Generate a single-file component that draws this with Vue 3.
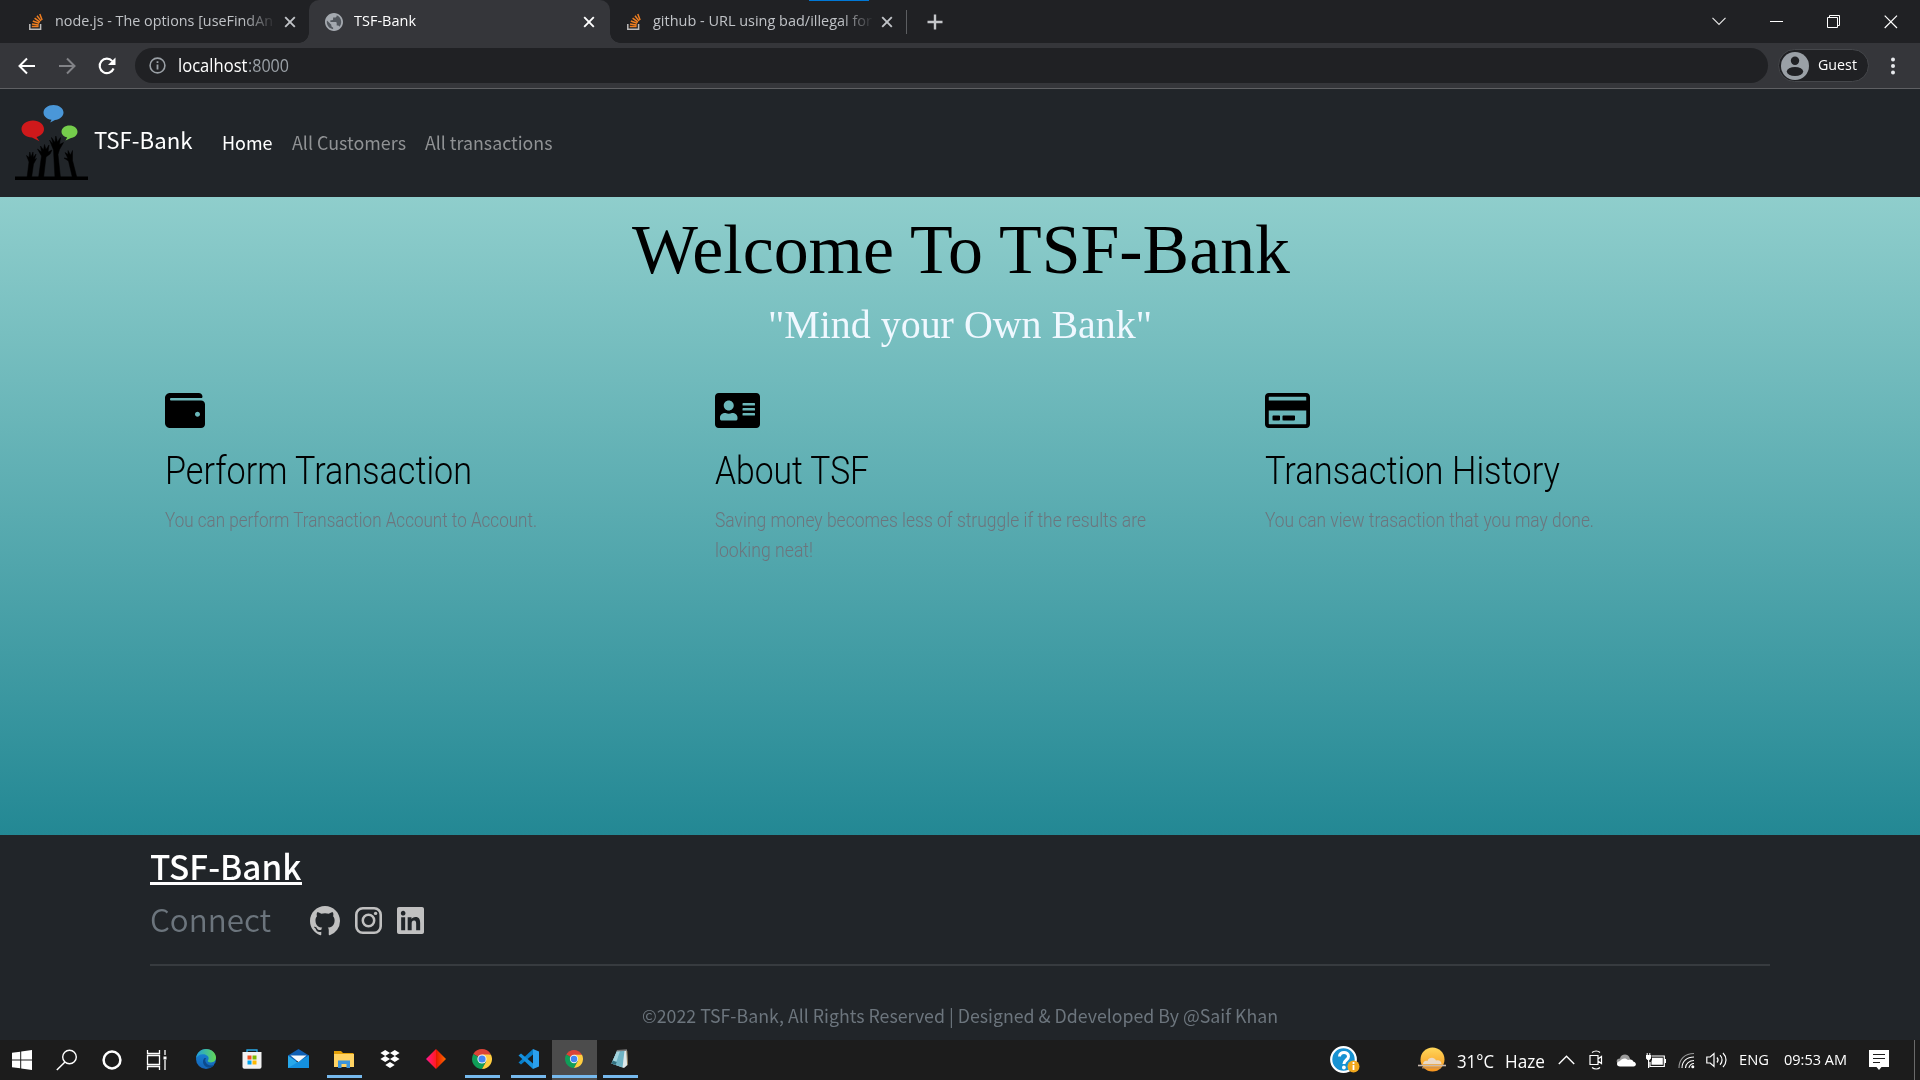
<script setup>
// Stretches a label horizontally so that it takes exactly the given width.
const vFit = {
  mounted(el, { value }) {
    const natural = el.getBoundingClientRect().width
    if (!natural) return
    el.style.transform = `scaleX(${value / natural})`
    el.style.marginRight = `${value - natural}px`
  }
}

const cards = [
  {
    title: 'Perform Transaction', titleWidth: 307, box: '0 32 512 448', iconWidth: 40,
    lines: [{ text: 'You can perform Transaction Account to Account.', width: 372 }],
    icon: 'M461.2 128H80c-8.84 0-16-7.16-16-16s7.16-16 16-16h384c8.84 0 16-7.16 16-16 0-26.51-21.49-48-48-48H64C28.65 32 0 60.65 0 96v320c0 35.35 28.65 64 64 64h397.2c28.02 0 50.8-21.53 50.8-48V176c0-26.47-22.78-48-50.8-48zM416 336c-17.67 0-32-14.33-32-32s14.33-32 32-32 32 14.33 32 32-14.33 32-32 32z'
  },
  {
    title: 'About TSF', titleWidth: 154, box: '0 32 576 448', iconWidth: 45,
    lines: [
      { text: 'Saving money becomes less of struggle if the results are', width: 431 },
      { text: 'looking neat!', width: 98 }
    ],
    icon: 'M528 32H48C21.5 32 0 53.5 0 80v352c0 26.5 21.5 48 48 48h480c26.5 0 48-21.5 48-48V80c0-26.5-21.5-48-48-48zm-352 96c35.3 0 64 28.7 64 64s-28.7 64-64 64-64-28.7-64-64 28.7-64 64-64zm112 236.8c0 10.6-10 19.2-22.4 19.2H86.4C74 384 64 375.4 64 364.8v-19.2c0-31.8 30.1-57.6 67.2-57.6h5c12.3 5.1 25.7 8 39.8 8s27.6-2.9 39.8-8h5c37.1 0 67.2 25.8 67.2 57.6v19.2zM512 312c0 4.4-3.6 8-8 8H360c-4.4 0-8-3.6-8-8v-16c0-4.4 3.6-8 8-8h144c4.4 0 8 3.6 8 8v16zm0-64c0 4.4-3.6 8-8 8H360c-4.4 0-8-3.6-8-8v-16c0-4.4 3.6-8 8-8h144c4.4 0 8 3.6 8 8v16zm0-64c0 4.4-3.6 8-8 8H360c-4.4 0-8-3.6-8-8v-16c0-4.4 3.6-8 8-8h144c4.4 0 8 3.6 8 8v16z'
  },
  {
    title: 'Transaction History', titleWidth: 295, box: '0 32 576 448', iconWidth: 45,
    lines: [{ text: 'You can view trasaction that you may done.', width: 329 }],
    icon: 'M527.9 32H48.1C21.5 32 0 53.5 0 80v352c0 26.5 21.5 48 48.1 48h479.8c26.6 0 48.1-21.5 48.1-48V80c0-26.5-21.5-48-48.1-48zM54.1 80h467.8c3.3 0 6 2.7 6 6v42H48.1V86c0-3.3 2.7-6 6-6zm467.8 352H54.1c-3.3 0-6-2.7-6-6V256h479.8v170c0 3.3-2.7 6-6 6zM192 332v40c0 6.6-5.4 12-12 12h-72c-6.6 0-12-5.4-12-12v-40c0-6.6 5.4-12 12-12h72c6.6 0 12 5.4 12 12zm192 0v40c0 6.6-5.4 12-12 12H236c-6.6 0-12-5.4-12-12v-40c0-6.6 5.4-12 12-12h136c6.6 0 12 5.4 12 12z'
  }
]
</script>

<template>
  <div class="screen">
    <svg class="defs" width="0" height="0">
      <symbol id="stack" viewBox="0 0 16 18">
        <path d="M1.8 11v5.2h10.8V11" fill="none" stroke="#bcbbbb" stroke-width="1.5" />
        <path d="M3.8 13.6h6.8M4 10.9l6.7 1M4.8 8l6.4 2.3M6.6 5.1l5.4 4M9 2.7l4 5.2M11.8.9l2.3 6.2" stroke="#ef7e20" stroke-width="1.5" />
      </symbol>
      <symbol id="cross" viewBox="0 0 12 12">
        <path d="M1.2 1.2l9.6 9.6M10.8 1.2l-9.6 9.6" stroke="currentColor" stroke-width="1.9" />
      </symbol>
      <symbol id="chrome" viewBox="0 0 20 20">
        <path d="M10 10L1.34 5A10 10 0 0 1 18.66 5z" fill="#db4437" />
        <path d="M10 10L1.34 5A10 10 0 0 0 10 20l4.3-7.5z" fill="#0f9d58" />
        <path d="M10 5.4h8.9A10 10 0 0 1 10 20l4.2-7.6z" fill="#ffcd40" />
        <circle cx="10" cy="10" r="4.6" fill="#f1f1f1" />
        <circle cx="10" cy="10" r="3.6" fill="#4285f4" />
      </symbol>
    </svg>

    <header class="tabstrip">
      <div class="tab first">
        <svg class="fav" width="16" height="18"><use href="#stack" /></svg>
        <span class="title fade"><span v-fit="218" class="fit">node.js - The options [useFindAn</span></span>
        <svg class="x" width="12" height="12"><use href="#cross" /></svg>
      </div>
      <div class="tab active">
        <svg class="fav" width="18" height="18" viewBox="2 2 20 20"><circle cx="12" cy="12" r="9.5" fill="#51565c" /><path fill="#a4a9af" d="M12 2C6.48 2 2 6.48 2 12s4.48 10 10 10 10-4.48 10-10S17.52 2 12 2zm-1 17.93c-3.95-.49-7-3.85-7-7.93 0-.62.08-1.21.21-1.79L9 15v1c0 1.1.9 2 2 2v1.93zm6.9-2.54c-.26-.81-1-1.39-1.9-1.39h-1v-3c0-.55-.45-1-1-1H8v-2h2c.55 0 1-.45 1-1V7h2c1.1 0 2-.9 2-2v-.41c2.93 1.19 5 4.06 5 7.41 0 2.08-.8 3.97-2.1 5.39z" /></svg>
        <span class="title"><span v-fit="62" class="fit">TSF-Bank</span></span>
        <svg class="x" width="12" height="12"><use href="#cross" /></svg>
      </div>
      <div class="tab third">
        <svg class="fav" width="16" height="18"><use href="#stack" /></svg>
        <span class="title fade"><span v-fit="219" class="fit">github - URL using bad/illegal for</span></span>
        <svg class="x" width="12" height="12"><use href="#cross" /></svg>
      </div>
      <i class="tabsep"></i>
      <svg class="plus" width="16" height="16" viewBox="0 0 16 16"><path d="M8 .5v15M.5 8h15" stroke="#c4c6c9" stroke-width="2.4" /></svg>
      <div class="winctl">
        <span><svg width="14" height="9" viewBox="0 0 14 9"><path d="M.5.8L7 7.3 13.5.8" fill="none" stroke="#e4e4e4" stroke-width="1.2" /></svg></span>
        <span><svg width="14" height="14" viewBox="0 0 14 14"><path d="M0 6.5h13" stroke="#fff" /></svg></span>
        <span><svg width="14" height="14" viewBox="0 0 14 14"><path d="M.5 2.5h10v10H.5zM2.5 2.5v-2h10v10h-2" fill="none" stroke="#fff" /></svg></span>
        <span><svg width="14" height="14" viewBox="0 0 14 14"><path d="M.7.7l12.3 12.3M13 .7L.7 13" stroke="#fff" stroke-width="1.2" /></svg></span>
      </div>
      <i class="accent"></i>
    </header>

    <div class="toolbar">
      <svg class="nav" width="40" height="24" viewBox="0 0 40 24"><path d="M28 12H13M20 4.5L12.5 12l7.5 7.5" fill="none" stroke="#fff" stroke-width="2" /></svg>
      <svg class="nav" width="40" height="24" viewBox="0 0 40 24"><path d="M12 12h15M20 4.5l7.5 7.5-7.5 7.5" fill="none" stroke="#828387" stroke-width="2" /></svg>
      <svg class="nav" width="40" height="24" viewBox="0 0 40 24"><path d="M26.6 14.5a7.2 7.2 0 1 1-1.3-7.4" fill="none" stroke="#fff" stroke-width="2.1" /><path d="M28.5 3.5v7.5H21z" fill="#fff" /></svg>
      <div class="omnibox">
        <svg width="17" height="17" viewBox="0 0 17 17"><circle cx="8.5" cy="8.5" r="7.4" fill="none" stroke="#9aa0a6" stroke-width="1.6" /><path d="M8.5 7.5v5M8.5 4.2v1.9" stroke="#9aa0a6" stroke-width="1.8" /></svg>
        <span v-fit="69.5" class="fit host">localhost</span><span v-fit="41" class="fit port">:8000</span>
      </div>
      <div class="guest">
        <svg width="28" height="28" viewBox="0 0 28 28"><circle cx="14" cy="14" r="14" fill="#9aa0a6" /><circle cx="14" cy="8.7" r="4.2" fill="#202124" /><ellipse cx="14" cy="19.5" rx="8.2" ry="4.5" fill="#202124" /></svg>
        <span v-fit="39" class="fit">Guest</span>
      </div>
      <svg class="dots" width="6" height="18" viewBox="0 0 6 18"><circle cx="3" cy="2.5" r="2" /><circle cx="3" cy="9" r="2" /><circle cx="3" cy="15.5" r="2" /></svg>
    </div>

    <nav class="navbar">
      <svg class="logo" width="73" height="76" viewBox="0 0 73 76">
        <path d="M38.5 0c5.5 0 10 3.3 10 7.5s-4 7-8.5 7.4l-4.8 2.6 1.3-2.7c-4.7-.5-8-3.6-8-7.3C28.5 3.3 33 0 38.5 0z" fill="#4a97d8" />
        <path d="M18 15.5c6.3 0 11 3.8 11 8.5 0 3.8-3 7-7.500 8l3 4.200-7.500-3.700C11 32.500 6.500 28.800 6.500 24c0-4.700 5-8.500 11.500-8.500z" fill="#cf191b" />
        <path d="M54.5 20.5c4.5 0 8 2.700 8 6.200 0 3.300-3 5.700-6.500 6.200l-5.500 2.600 1.700-3.100c-3.300-.7-5.700-2.900-5.700-5.700 0-3.500 3.500-6.200 8-6.200z" fill="#75cd4c" />
        <path d="M0 71.500h73V75H0z" />
        <path d="M12 73l2-16-2.500-6.500 2.500 2 .8-5.500 1.200 5 2-5 .3 5.500 2.700-3.500-1.500 5.500 2-1-3 5.500-2 14zM23.500 73l3-22-4-7 4 3-1-6 3 4 1-5.500 1.500 5 3-4.500-1 7 4-2-2 4-4 3-2.500 21zM40 73l-1.500-28-4-10 3.500 4-1.500-6.500 3.500 5 .8-6.500 1.700 6 3-4.500-1 7 4-2-4 7-1.500 5 2.500 23.500zM57.500 73l-4-17-4.500-3 4 .5-3-6 3 2v-4l2.500 4.500 2-4.500v10L62 73z" stroke="#000" stroke-width=".5" stroke-linejoin="round" />
      </svg>
      <span v-fit="98.5" class="fit brand">TSF-Bank</span>
      <span v-fit="50.5" class="fit link on">Home</span>
      <span v-fit="114" class="fit link">All Customers</span>
      <span v-fit="127.5" class="fit link">All transactions</span>
    </nav>

    <main class="hero">
      <h1><span v-fit="658" class="fit">Welcome To TSF-Bank</span></h1>
      <h2><span v-fit="384" class="fit">"Mind your Own Bank"</span></h2>
      <section class="cards">
        <article v-for="card in cards" :key="card.title">
          <svg :width="card.iconWidth" height="35" :viewBox="card.box"><path :d="card.icon" /></svg>
          <h3><span v-fit="card.titleWidth" class="fit">{{ card.title }}</span></h3>
          <p v-for="line in card.lines" :key="line.text"><span v-fit="line.width" class="fit">{{ line.text }}</span></p>
        </article>
      </section>
    </main>

    <footer class="footer">
      <div class="fname"><span v-fit="151.5" class="fit">TSF-Bank</span></div>
      <div class="connect">
        <span v-fit="121" class="fit">Connect</span>
        <svg class="gh" width="30" height="30" viewBox="0 0 16 16"><path d="M8 0C3.58 0 0 3.58 0 8c0 3.54 2.29 6.53 5.47 7.59.4.07.55-.17.55-.38 0-.19-.01-.82-.01-1.49-2.01.37-2.53-.49-2.69-.94-.09-.23-.48-.94-.82-1.13-.28-.15-.68-.52-.01-.53.63-.01 1.08.58 1.23.82.72 1.21 1.87.87 2.33.66.07-.52.28-.87.51-1.07-1.78-.2-3.64-.89-3.64-3.95 0-.87.31-1.59.82-2.15-.08-.2-.36-1.02.08-2.12 0 0 .67-.21 2.2.82.64-.18 1.32-.27 2-.27s1.36.09 2 .27c1.53-1.04 2.2-.82 2.2-.82.44 1.1.16 1.92.08 2.12.51.56.82 1.27.82 2.15 0 3.07-1.87 3.75-3.65 3.95.29.25.54.73.54 1.48 0 1.07-.01 1.93-.01 2.2 0 .21.15.46.55.38A8.01 8.01 0 0 0 16 8c0-4.42-3.58-8-8-8" /></svg>
        <svg class="ig" width="27" height="27" viewBox="0 0 27 27"><rect x="1.3" y="1.3" width="24.4" height="24.4" rx="6.5" fill="none" stroke="#c0c0c0" stroke-width="2.6" /><circle cx="13.5" cy="13.5" r="5.7" fill="none" stroke="#c0c0c0" stroke-width="2.5" /><circle cx="20.6" cy="6.4" r="1.7" /></svg>
        <svg class="li" width="27" height="27" viewBox="0 32 448 448"><path d="M416 32H31.9C14.3 32 0 46.5 0 64.3v383.4C0 465.5 14.3 480 31.9 480H416c17.6 0 32-14.5 32-32.3V64.3c0-17.8-14.4-32.3-32-32.3zM135.4 416H69V202.2h66.5V416zm-33.2-243c-21.3 0-38.5-17.3-38.5-38.5S80.9 96 102.2 96c21.2 0 38.5 17.3 38.5 38.5 0 21.3-17.2 38.5-38.5 38.5zm282.1 243h-66.4V312c0-24.8-.5-56.7-34.5-56.7-34.6 0-39.9 27-39.9 54.9V416h-66.4V202.2h63.7v29.2h.9c8.9-16.8 30.6-34.5 62.9-34.5 67.2 0 79.7 44.3 79.7 101.9V416z" /></svg>
      </div>
      <hr />
      <p class="copy"><span v-fit="636" class="fit">©2022 TSF-Bank, All Rights Reserved | Designed &amp; Ddeveloped By @Saif Khan</span></p>
    </footer>

    <div class="taskbar">
      <div class="sys">
        <span><svg width="20" height="20" viewBox="0 0 20 20"><path d="M0 2.8l8.2-1.1v7.8H0zM9.2 1.500L20 0v9.500H9.200zM0 10.500h8.200v7.800L0 17.200zM9.200 10.500H20V20L9.200 18.500z" fill="#fff" /></svg></span>
        <span><svg width="22" height="22" viewBox="0 0 22 22"><circle cx="13.5" cy="8" r="6.8" fill="none" stroke="#fff" stroke-width="1.4" /><path d="M9 13L.8 21" stroke="#fff" stroke-width="1.5" /></svg></span>
        <span><svg width="20" height="20" viewBox="0 0 20 20"><circle cx="10" cy="10" r="8.4" fill="none" stroke="#fff" stroke-width="2.5" /></svg></span>
        <span><svg width="21" height="20" viewBox="0 0 21 20"><path d="M1.5 0v3.5h12V0M1.5 20v-3.5h12V20M1.5 5.5h12v9h-12zM19 0v5M19 10v10" fill="none" stroke="#fff" stroke-width="1.3" /><path d="M17.5 6.5h3v3h-3z" fill="#fff" /></svg></span>
      </div>
      <div class="apps">
        <span><svg width="20" height="20" viewBox="0 0 20 20"><defs><linearGradient id="e1" x1="0" y1="0" x2="1" y2="0"><stop offset="0" stop-color="#1e9de0" /><stop offset="1" stop-color="#63d954" /></linearGradient><linearGradient id="e2" x1="0" y1="0" x2="0" y2="1"><stop offset="0" stop-color="#1686d9" /><stop offset="1" stop-color="#1563b5" /></linearGradient></defs><circle cx="10" cy="10" r="10" fill="url(#e2)" /><path d="M0 9.5C.5 4 4.8 0 10 0c6 0 10 4.3 10 8.5 0 3.2-2.5 4.9-5 4.9-2 0-3.3-.8-3.3-1.5 0-.6.9-1 .9-2.700C12.600 7 10 5.300 7 5.300c-3.500 0-5.800 1.700-7 4.200z" fill="url(#e1)" /><path d="M8.5 9c-3 2.6-1.5 9.5 5 9.7 2 0 4-1.500 5-3-3.500 1.500-8 .5-9-3-.4-1.300-.2-2.600.7-3.700z" fill="#0c4a8c" /><path d="M18.8 14.2l3 3.5-6.500 4 3.200-6z" fill="#1c1c1c" /></svg></span>
        <span><svg width="20" height="20" viewBox="0 0 20 20"><path d="M5 4.5V1h10v3.5" fill="none" stroke="#29a9e8" stroke-width="1.3" /><path d="M.5 3h19v15a1.8 1.8 0 0 1-1.8 1.8H2.3A1.8 1.8 0 0 1 .5 18z" fill="#f2f2f2" /><path d="M5.5 6.500h4v4h-4z" fill="#f25022" /><path d="M10.5 6.500h4v4h-4z" fill="#7fba00" /><path d="M5.5 11.500h4v4h-4z" fill="#00a4ef" /><path d="M10.5 11.500h4v4h-4z" fill="#ffb900" /></svg></span>
        <span><svg width="21" height="20" viewBox="0 0 21 20"><path d="M0 6.5L10.5 0 21 6.5V12H0z" fill="#0f5fb4" /><path d="M0 6.5l10.5 7.5L21 6.500V19H0z" fill="#28a8ea" /><path d="M21 6.5L0 19h21z" fill="#1490df" /><path d="M2.5 6.5h16L10.500 13z" fill="#f5f9fc" /></svg></span>
        <span class="run"><svg width="20" height="18" viewBox="0 0 20 18"><path d="M0 1h7l2 2h10.5v6H0z" fill="#e3a008" /><path d="M0 4h20v13H0z" fill="#ffd363" /><path d="M4 10.5h12V18h-3.500v-4h-5v4H4z" fill="#3b95dc" /></svg></span>
        <span><svg width="20" height="18" viewBox="0 0 20 18"><path d="M5.2 0L10 3 5.2 6 .4 3zM14.8 0l4.8 3-4.8 3L10 3zM5.2 6L10 9l-4.800 3L.4 9zM14.800 6l4.800 3-4.800 3L10 9zM10 12l4.700 3L10 18l-4.700-3z" fill="#fff" /></svg></span>
        <span><svg width="20" height="20" viewBox="0 0 20 20"><defs><linearGradient id="rd" x1="0" y1="0" x2="1" y2="0"><stop offset="0" stop-color="#ff1691" /><stop offset=".48" stop-color="#ff1b25" /><stop offset=".52" stop-color="#e31900" /><stop offset="1" stop-color="#ff6d00" /></linearGradient></defs><path d="M10 0l10 10-10 10L0 10z" fill="url(#rd)" /></svg></span>
        <span class="run"><svg width="20" height="20"><use href="#chrome" /></svg></span>
        <span class="run"><svg width="21" height="20" viewBox="0 0 21 20"><path d="M15 0l6 2.5v15L15 20z" fill="#2ba0ee" /><path d="M15 0v5.5L3 15.5l-2.5-2L15 0z" fill="#087fcb" /><path d="M15 20v-5.5L3 4.5l-2.5 2L15 20z" fill="#1591df" /></svg></span>
        <span class="run current"><svg width="18" height="18"><use href="#chrome" /></svg></span>
        <span class="run"><svg width="20" height="20" viewBox="0 0 20 20"><path d="M7 2l10-1 .5 15-3.500 3L1.500 14.500z" fill="#dfe8e9" /><path d="M7 2l7.500-.3L12.500 18.500 1.500 14.500z" fill="#6fb3c4" /><path d="M7 2h3L6.500 12.500l-5 2z" fill="#a5d4dd" /><path d="M2.700 11.500l4 1.500-1.200 3-4-1.500z" fill="#33707f" /><path d="M16.800 2l.8 14" stroke="#8f7d5c" /><path d="M6.800 1.800L17 1" stroke="#777" stroke-width="1.500" /></svg></span>
      </div>
      <div class="tray">
        <span class="t-help"><svg width="30" height="28" viewBox="0 0 30 28"><circle cx="13.5" cy="13.5" r="12.3" fill="#1792d2" stroke="#fff" stroke-width="2.2" /><path d="M9.5 10.5c0-5.5 9-5.500 9 0 0 3.600-4.600 3.500-4.600 7.500" fill="none" stroke="#fff" stroke-width="3" /><circle cx="13.9" cy="21.5" r="1.9" fill="#fff" /><circle cx="23.5" cy="20.5" r="6" fill="#f2a81d" /><path d="M23.5 19v5M23.5 16v2" stroke="#fff" stroke-width="1.8" /></svg></span>
        <span class="t-sun"><svg width="29" height="26" viewBox="0 0 29 26"><defs><linearGradient id="sn" x1="0" y1="0" x2="0" y2="1"><stop offset="0" stop-color="#ffd75a" /><stop offset="1" stop-color="#f7941d" /></linearGradient></defs><circle cx="14.5" cy="12.5" r="12" fill="url(#sn)" /><path d="M5 17c0-2.5 2.5-4 4.5-3 1-4 7-4.5 8.5-.5 3-1 5.5.5 5.500 3.500z" fill="#ead9c6" /><path d="M0 18.5h28" stroke="#c8b9ad" stroke-width="1.6" /><path d="M4 20.8h19" stroke="#c99159" stroke-width="1.2" /></svg></span>
        <span v-fit="37" class="fit weather t-temp">31°C</span>
        <span v-fit="40" class="fit weather t-haze">Haze</span>
        <span class="t-up"><svg width="17" height="10" viewBox="0 0 17 10"><path d="M.8 9L8.5 1.3 16.2 9" fill="none" stroke="#fff" stroke-width="1.4" /></svg></span>
        <span class="cell"><svg width="16" height="20" viewBox="0 0 16 20"><path d="M2 5.5h8v9H2zM10 9l3.5-2.5v7L10 11M4 2.5c2.5-2 6-2 8 0M4 17.5c2.5 2 6 2 8 0" fill="none" stroke="#fff" stroke-width="1.2" /></svg></span>
        <span class="cell"><svg width="20" height="14" viewBox="0 0 20 14"><path d="M3 11C-.5 10 0 5.500 4 5.500 4.500 1 11 0 13 3.500L15 8l-5 5z" fill="#9b9b9b" /><path d="M4 13.500c-4 0-4-5 0-5.500 1.500-3 6-3.500 8-1 3-1.500 5 0 5.500 1.700 3.200.3 3.200 4.800 0 4.800z" fill="#fff" /></svg></span>
        <span class="cell"><svg width="20" height="15" viewBox="0 0 20 15"><path d="M5.500 3h12.800v10.500H4V9" fill="none" stroke="#fff" stroke-width="1.2" /><path d="M6 4.800h10.800v7H5.500V8L6 7zM18.500 6H20v4h-1.500zM0 2h5v3.500L3.500 7h-2L0 5.500zM.7 0h1v2h-1zM3.300 0h1v2h-1zM2 7h1.200v8H2z" fill="#fff" /></svg></span>
        <span class="cell"><svg width="17" height="17" viewBox="0 0 17 17"><g fill="none" stroke="#fff" stroke-width="1.1"><path d="M1 16C1 7 7 1.500 16 1.500" stroke="#999" /><path d="M4 16C4 9 9 5 16 5M7.500 16c0-4.500 4-7.500 8.500-7.500M11 16c0-2.500 2.500-4.500 5-4.500" /></g><circle cx="14.8" cy="14.8" r="1.5" fill="#fff" /></svg></span>
        <span class="cell"><svg width="21" height="18" viewBox="0 0 21 18"><path d="M.8 6h3.400L8 2.500v13L4.200 12H.8zM11 6.500c1.300 1.500 1.300 3.500 0 5M14 4.200c2.700 2.700 2.700 7 0 9.600M17 2c4 4 4 10 0 14" fill="none" stroke="#fff" stroke-width="1.2" /></svg></span>
        <span v-fit="30" class="fit small t-eng">ENG</span>
        <span v-fit="63" class="fit small t-time">09:53 AM</span>
        <svg class="t-note" width="20" height="20" viewBox="0 0 20 20"><path d="M0 0h20v17h-7.500L10 20l-2.500-3H0z" fill="#fff" /><path d="M4 4.500h12M4 8.500h12M4 12.500h7" stroke="#1c1c1c" stroke-width="1.2" /></svg>
        <i class="edge"></i>
      </div>
    </div>
  </div>
</template>

<style>
body { margin: 0; overflow: hidden; }
</style>

<style scoped>
.screen { width: 1920px; height: 1080px; display: flex; flex-direction: column; overflow: hidden; background: #212529; font-family: "Open Sans", "Noto Sans", sans-serif; }
.screen > * { flex: none; }
.defs { position: absolute; }
svg { display: block; flex: none; }
h1, h2, h3, p { margin: 0; font-weight: 400; }
.fit { display: inline-block; flex: none; white-space: nowrap; transform-origin: 0 50%; }

.tabstrip { position: relative; height: 43px; display: flex; align-items: center; background: #202124; color: #c0c3c7; font-size: 14.5px; }
.tab { height: 43px; display: flex; align-items: center; box-sizing: border-box; flex: none; }
.tab .title { display: flex; width: 219px; line-height: 24px; padding-bottom: 2px; }
.fade { -webkit-mask-image: linear-gradient(90deg, #000 86%, transparent 101%); mask-image: linear-gradient(90deg, #000 86%, transparent 101%); }
.first { width: 309px; padding-left: 28px; }
.first .fav, .third .fav { margin-right: 11px; }
.first .x { margin-left: 10px; }
.active { position: relative; width: 301px; padding-left: 16px; background: #35363a; color: #fff; border-radius: 10px 10px 0 0; }
.active::before, .active::after { content: ""; position: absolute; bottom: 0; width: 10px; height: 10px; }
.active::before { left: -10px; background: radial-gradient(circle at 0 0, transparent 9.5px, #35363a 10px); }
.active::after { right: -10px; background: radial-gradient(circle at 100% 0, transparent 9.5px, #35363a 10px); }
.active .fav { margin-right: 11px; }
.active .x { margin-left: 10px; }
.third { width: 296px; padding-left: 16px; }
.third .x { margin-left: 9px; }
.tabsep { width: 1px; height: 24px; background: #5c5e61; }
.plus { margin-left: 20px; }
.winctl { margin-left: auto; height: 37px; display: flex; }
.winctl span { width: 57.3px; display: flex; align-items: center; justify-content: center; }
.accent { position: absolute; left: 809px; top: 0; width: 60px; height: 1px; background: #0078d7; }

.toolbar { height: 46px; box-sizing: border-box; border-bottom: 1px solid #5f6063; background: #35363a; display: flex; align-items: center; padding-left: 7px; }
.omnibox { width: 1633px; height: 35px; margin-left: 8px; border-radius: 18px; background: #202124; display: flex; align-items: center; font-size: 17.5px; }
.omnibox svg { margin: 0 12px 0 14px; }
.omnibox .fit { padding-bottom: 2px; }
.host { color: #fff; }
.port { color: #9aa0a6; }
.guest { width: 91px; height: 33px; box-sizing: border-box; margin-left: 10px; border: 1px solid #45474b; border-radius: 17px; background: #202124; color: #fff; display: flex; align-items: center; font-size: 14.5px; padding-left: 2px; }
.guest svg { margin-right: 9px; }
.guest .fit { padding-bottom: 2px; }
.dots { margin-left: 21px; fill: #e8eaed; }

.navbar { height: 108px; background: #212529; display: flex; align-items: center; padding: 0 0 1px 15px; box-sizing: border-box; font-family: "Noto Sans CJK SC", sans-serif; }
.brand { margin-left: 6px; font-size: 22.5px; line-height: 36px; color: #fff; padding-bottom: 7px; }
.link { margin-left: 19.5px; font-size: 18px; line-height: 30px; color: #909294; padding-bottom: 1px; }
.link.on { margin-left: 29px; color: #fff; }

.hero { height: 638px; background: linear-gradient(#8fcecc, #238894); color: #000; }
h1 { display: flex; justify-content: center; padding: 11px 0 0 1px; font: 70px/84px "Liberation Serif", serif; }
h2 { display: flex; justify-content: center; padding-top: 9px; font: 40px/48px "Liberation Serif", serif; color: #f0f8ff; }
.cards { display: grid; grid-template-columns: 550px 550px 500px; padding: 44px 0 0 165px; font-family: Roboto, sans-serif; }
h3 { margin: 19px 0 11px; font-size: 39.5px; line-height: 48px; font-weight: 300; }
.cards p { font-size: 19.5px; line-height: 30px; color: #6c757d; height: 30px; font-weight: 300; }

.footer { height: 205px; background: #212529; padding: 0 150px; font-family: "Noto Sans CJK SC", sans-serif; overflow: hidden; }
.fname { height: 56px; font-size: 34px; color: #fff; padding-top: 6px; box-sizing: border-box; font-weight: 500; }
.fname span { height: 43px; line-height: 48px; border-bottom: 3px solid #fff; box-sizing: border-box; }
.connect { display: flex; align-items: center; height: 48px; margin-top: 5px; font-size: 31.5px; line-height: 48px; font-weight: 350; color: #6c757d; }
.connect .fit { padding-bottom: 4px; }
.connect svg { fill: #c0c0c0; margin-top: 1px; }
.connect .gh { margin-left: 39px; }
.ig { margin-left: 15px; }
.li { margin-left: 15px; }
hr { border: 0; height: 2px; margin: 20px 0 0; background: #373b3f; }
.copy { display: flex; justify-content: center; margin-top: 32px; font-size: 18px; line-height: 34px; color: #6c757d; }

.taskbar { height: 40px; background: #1c1c1c; display: flex; color: #fff; }
.sys, .apps { display: flex; }
.sys { margin-left: -1px; }
.sys span { width: 45px; display: flex; align-items: center; justify-content: center; }
.apps { margin-left: 4px; }
.apps span { position: relative; width: 46px; display: flex; align-items: center; justify-content: center; padding-bottom: 2px; box-sizing: border-box; }
.apps .run::after { content: ""; position: absolute; left: 6px; right: 5px; bottom: 2px; height: 3px; background: #76b9ed; }
.apps .current { background: linear-gradient(#4c4c4c, #4c4c4c) 1px 0 / 45px 100% no-repeat; }
.apps .current::after { left: 1px; right: 0; }
.tray { margin-left: auto; width: 590px; display: flex; align-items: center; }
.t-sun { margin-left: 58px; }
.weather { font-size: 17.5px; padding-top: 2px; }
.t-temp { margin-left: 10px; }
.t-haze { margin-left: 11px; }
.t-up { margin: 0 6px 0 13px; }
.cell { width: 30px; display: flex; justify-content: center; }
.small { font-size: 14.5px; padding-bottom: 1px; }
.t-eng { margin-left: 8px; }
.t-time { margin-left: 15px; }
.t-note { margin-left: 22px; }
.edge { width: 1px; height: 40px; margin-left: 25px; background: #6a6a6a; }
</style>
